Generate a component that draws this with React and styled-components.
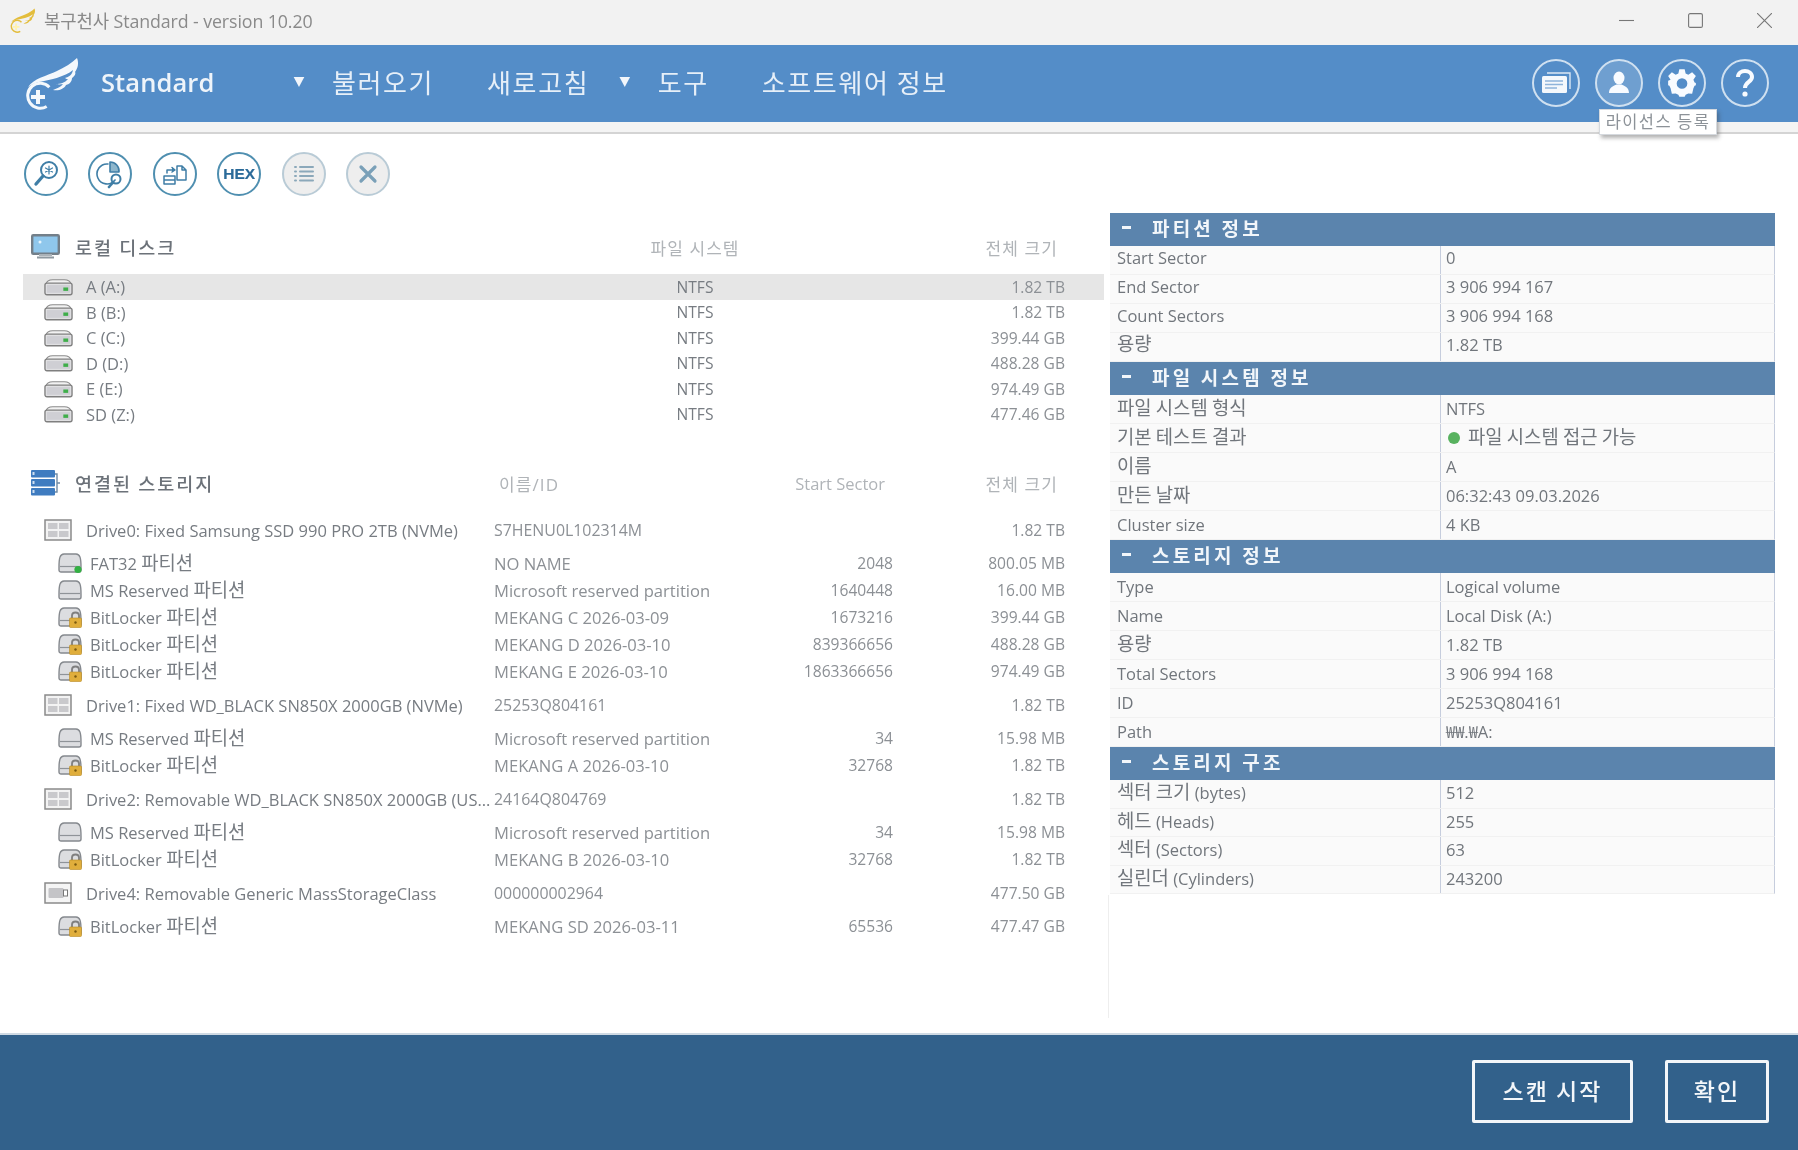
import React from "react";
import styled, { createGlobalStyle } from "styled-components";

const Global = createGlobalStyle`
  html, body { margin: 0; padding: 0; background: #fff; }
  * { box-sizing: border-box; }
`;

const FONT = `"Open Sans", "Noto Sans CJK KR", sans-serif`;
const KFONT = `"Noto Sans CJK KR", "Noto Sans", sans-serif`;

const Root = styled.div`
  width: 1798px; height: 1150px; display: flex; flex-direction: column;
  font-family: ${FONT}; font-size: 16.5px; color: #777c82; overflow: hidden; background: #fff;
  filter: blur(0.35px);
`;

const TitleBar = styled.div`
  height: 45px; background: #f2f2f2; display: flex; align-items: center; padding: 0 0 5px 10px; flex: none;
`;
const TitleText = styled.span`
  margin-left: 8px; font-size: 17.8px; color: #8a8a8a; font-family: ${FONT}; letter-spacing: -0.1px;
`;
const WinControls = styled.div`
  margin-left: auto; display: flex; align-items: center; padding-right: 26px; gap: 54px;
`;
const WinIcon = styled.svg`
  width: 15px; height: 15px; display: block; fill: none; stroke: #777; stroke-width: 1.1;
`;

const Header = styled.header`
  height: 77px; background: #548dc8; display: flex; align-items: center; padding-left: 25px; flex: none; position: relative;
`;
const Brand = styled.div`
  width: 267px; display: flex; align-items: center; flex: none;
`;
const BrandName = styled.span`
  margin: 0 0 4px 21px; color: #eef4fa; font-size: 25.5px; font-weight: 600; letter-spacing: 0.1px;
`;
const Arrow = styled.span`
  width: 14px; height: 10px; flex: none; margin: 0 26px 3px ${p => p.$gap || 0}px;
  background: #f2f6fb; clip-path: polygon(12% 0, 88% 0, 50% 100%);
`;
const MenuItem = styled.span`
  font-family: ${KFONT}; color: #e6eff8; font-size: 26px; font-weight: 400; letter-spacing: 1.6px;
  margin: 0 0 4px ${p => p.$gap || 0}px; white-space: nowrap;
`;
const HeaderTools = styled.div`
  margin: 0 29px 1px auto; display: flex; gap: 15px; position: relative;
`;
const RoundTool = styled.div`
  width: 48px; height: 48px; border-radius: 50%; border: 2px solid #cfe0f0;
  background: ${p => p.$active ? "#6f9fd0" : "transparent"};
  display: flex; align-items: center; justify-content: center; color: #fff;
`;
const Tooltip = styled.div`
  position: absolute; left: 67px; top: 50px; width: 118px; height: 26px; padding-bottom: 3px; background: #fff;
  border: 1px solid #d5d9de; box-shadow: 2px 3px 4px rgba(60,60,60,.4);
  font-family: ${KFONT}; font-size: 16.5px; color: #8c9298; letter-spacing: 1.4px;
  display: flex; align-items: center; justify-content: center; white-space: nowrap; z-index: 5;
`;
const Strip = styled.div`
  height: 12px; background: #f4f4f4; border-bottom: 2px solid #d4d4d4; flex: none;
`;

const Toolbar = styled.div`
  height: 79px; display: flex; align-items: center; padding-left: 24px; gap: 20.4px; flex: none;
`;
const ToolCircle = styled.div`
  width: 44px; height: 44px; border-radius: 50%; display: flex; align-items: center; justify-content: center;
  border: 2px solid ${p => p.$muted ? "#b9cbd6" : "#4f8fb0"};
  background: ${p => p.$muted ? "#eeeeee" : "#fff"};
`;
const HexLabel = styled.span`
  font-family: "Liberation Sans", sans-serif; font-weight: 700; font-size: 15.5px; color: #2a6a99;
  -webkit-text-stroke: 0.2px #2a6a99;
`;

const Main = styled.main`
  flex: 1; display: flex; padding-left: 23px; min-height: 0; gap: 6px;
`;
const Left = styled.section`
  width: 1081px; flex: none;
`;
const SectionHead = styled.div`
  height: 40px; display: grid; align-items: center; padding: 0 46px 0 8px;
  margin: ${p => p.$top}px 0 ${p => p.$bottom}px;
  grid-template-columns: ${p => p.$cols};
`;
const SectionTitle = styled.div`
  display: flex; align-items: center; gap: 15px; font-family: ${KFONT}; font-size: 18.5px; font-weight: 500;
  color: #6c7279; letter-spacing: 2px;
`;
const Caption = styled.span`
  font-family: ${FONT}; color: #b0b4b8; font-size: ${p => p.$latin ? 16.5 : 17}px; letter-spacing: ${p => p.$latin ? 0 : 1.1}px; white-space: nowrap;
  text-align: ${p => p.$align || "left"};
  padding-left: ${p => p.$pad || 0}px;
`;

const DiskRow = styled.div`
  height: 25.5px; display: grid; grid-template-columns: 572px 200px 270px; padding-right: 39px; align-items: center;
  background: ${p => p.$sel ? "#e6e6e6" : "transparent"};
`;
const DriveRow = styled.div`
  height: 32px; margin-bottom: 3.5px; display: grid; grid-template-columns: 471px 246px 153px 172px; padding-right: 39px; align-items: center;
`;
const PartRow = styled.div`
  height: 27px; display: grid; grid-template-columns: 471px 246px 153px 172px; padding-right: 39px; align-items: center;
`;
const Group = styled.div`
  padding-bottom: 4.5px;
`;
const NameCell = styled.div`
  display: flex; align-items: center; padding-left: ${p => p.$indent}px; gap: ${p => p.$gap}px; min-width: 0; white-space: nowrap;
`;
const Ko = styled.span`
  font-family: ${KFONT}; font-size: 1.14em; line-height: 1;
`;
const Cell = styled.span`
  text-align: ${p => p.$align || "left"}; white-space: nowrap; font-size: ${p => p.$size || 15.6}px;
  color: ${p => p.$soft ? "#8c9095" : "#777c82"};
`;

const Panel = styled.aside`
  width: 665px; flex: none; display: flex; flex-direction: column; height: 805px; position: relative;
  &::after { content: ""; position: absolute; left: -2px; top: 682px; bottom: 0; width: 1px; background: #eeeeee; }
`;
const PanelHead = styled.div`
  height: 33px; background: #5b84ad; display: flex; align-items: center; padding: 0 0 4px 12px; color: #f2f6fa;
  font-family: ${KFONT}; font-size: 19px; font-weight: 700; letter-spacing: 3.2px; flex: none;
`;
const Dash = styled.span`
  width: 9px; height: 3px; background: #f2f6fa; margin-right: 21px; flex: none;
`;
const InfoRow = styled.div`
  height: ${p => p.$h}px; display: grid; grid-template-columns: 331px 1fr; background: #fafafa; align-items: stretch;
  border-bottom: 1px solid #f1f1f1; border-right: 1px solid #c6cddd; flex: none;
`;
const InfoKey = styled.div`
  padding: 0 0 ${p => p.$lift}px 7px; display: flex; align-items: center; border-right: 1px solid #c6cddd; color: #71767c; white-space: pre;
`;
const InfoVal = styled.div`
  padding: 0 0 ${p => p.$lift}px 5px; display: flex; align-items: center; gap: 8px; color: #71767c; white-space: pre;
`;
const Dot = styled.span`
  width: 12px; height: 12px; margin-left: 2px; border-radius: 50%; background: #58b25f; flex: none;
`;

const Footer = styled.footer`
  height: 117px; background: #32618b; border-top: 2px solid #cfdae4; flex: none; display: flex; align-items: flex-start;
  justify-content: flex-end; padding: 25px 29px 0 0; gap: 32px;
`;
const FootButton = styled.button`
  width: ${p => p.$w}px; height: 63px; background: transparent; border: 3px solid #f3f6f9; border-radius: 2px;
  color: #f3f6f9; font-family: ${KFONT}; font-size: 23px; font-weight: 500; letter-spacing: 2px; padding: 0 0 4px;
`;

const mix = (text) => text.split(/([\uAC00-\uD7A3]+(?: [\uAC00-\uD7A3]+)*)/).map((part, i) =>
  i % 2 ? <Ko key={i}>{part}</Ko> : part
);

const WingPath = "M3 30 C9 21 22 19 32 14 C40 10 47 6 52 1 C54 6 53 11 50 15 C51 16 50 19 47 21 C47 24 45 27 41 28 C39 32 34 34 28 33 C32 31 36 30 38 27 C34 28 31 27 31 27 C35 27 40 26 43 22 C42 22 41 22 40 21 C44 20 47 18 48 13 C40 20 24 23 14 25 C9 26 6 28 3 30 Z";

const Wing = ({ w, h, color, plus }) => (
  <svg width={w} height={h} viewBox="0 0 55 53" style={{ flex: "none" }}>
    <path d={WingPath} fill={color} />
    <path d="M21 50 A12.5 12.5 0 1 1 25 31" transform="rotate(-4 13 40)" fill="none" stroke={color} strokeWidth="3" />
    <path d="M13 33 V47 M6 40 H20" stroke={plus} strokeWidth="4" fill="none" />
  </svg>
);

const Hdd = () => (
  <svg width="29" height="18" viewBox="0 0 30 18" style={{ flex: "none" }}>
    <path d="M2 6 C3 2 6 1.5 9 1.5 H21 C24 1.5 27 2 28 6" fill="#f2f2f2" stroke="#8b8b8b" strokeWidth="1.2" />
    <rect x="1" y="5" width="28" height="12" rx="2" fill="#e0e0e2" stroke="#7f7f7f" strokeWidth="1.4" />
    <rect x="3" y="7" width="24" height="8" fill="#cfcfd4" />
    <rect x="20" y="9.5" width="5" height="3.5" fill="#3fae4a" />
  </svg>
);
const Monitor = () => (
  <svg width="29" height="26" viewBox="0 0 29 26" style={{ flex: "none" }}>
    <rect x="1.2" y="1.2" width="26.6" height="18.6" rx="1" fill="#8fc7ec" stroke="#737f89" strokeWidth="2.4" />
    <rect x="8" y="20" width="13" height="2" fill="#aab2b8" />
    <rect x="6" y="22.5" width="17" height="2" fill="#8e989f" />
    <circle cx="9" cy="8" r="1.5" fill="#e7f5fd" />
  </svg>
);
const Stack = () => (
  <svg width="29" height="26" viewBox="0 0 29 26" style={{ flex: "none" }}>
    <path d="M22 4 H26 V22 H22 M26 13 H29" fill="none" stroke="#6f8ba6" strokeWidth="1.4" />
    {[0, 9, 18].map(y => (
      <g key={y}>
        <rect x="0" y={y} width="24" height="7.5" rx="1" fill="#3f7cc0" />
        <rect x="1.5" y={y + 2} width="2" height="3" fill="#cfe0f2" />
      </g>
    ))}
  </svg>
);
const DriveIcon = () => (
  <svg width="28" height="22" viewBox="0 0 28 22" style={{ flex: "none" }}>
    <rect x="1" y="1" width="26" height="20" fill="#f3f3f3" stroke="#8a8a8a" strokeWidth="1.5" />
    <rect x="4" y="4" width="9.5" height="6" fill="#c9c9cc" />
    <rect x="15" y="4" width="9.5" height="6" fill="#c9c9cc" />
    <rect x="4" y="12" width="9.5" height="6" fill="#c9c9cc" />
    <rect x="15" y="12" width="9.5" height="6" fill="#c9c9cc" />
  </svg>
);
const UsbIcon = () => (
  <svg width="28" height="22" viewBox="0 0 28 22" style={{ flex: "none" }}>
    <rect x="1" y="1" width="26" height="20" fill="#f5f5f5" stroke="#8a8a8a" strokeWidth="1.5" />
    <rect x="4.5" y="6" width="15" height="10" rx="1" fill="#c4c4c7" />
    <rect x="19.5" y="8" width="4" height="6" fill="#fff" stroke="#777" strokeWidth="1" />
  </svg>
);
const PartIcon = ({ kind }) => (
  <svg width="25" height="22" viewBox="0 0 25 22" style={{ flex: "none" }}>
    <path d="M1 15 C1 6 2 2 6 2 H18 C22 2 23 6 23 15 V18 C23 19.5 22 20 21 20 H3 C2 20 1 19.5 1 18 Z" fill="#dcdde0" stroke="#85898e" strokeWidth="1.4" />
    <path d="M2 14.5 H22" stroke="#8f9398" strokeWidth="1.2" />
    {kind === "ok" && <circle cx="20" cy="17.5" r="3.6" fill="#33b043" />}
    {kind === "lock" && (
      <g>
        <path d="M14 13 V9.5 C14 5.5 21 5.5 21 9.5 V13" fill="none" stroke="#7f7f7f" strokeWidth="1.8" />
        <rect x="11.5" y="12" width="12" height="9.5" rx="1" fill="#e0ae3c" stroke="#b98a22" strokeWidth=".6" />
        <circle cx="17.5" cy="16.5" r="1.2" fill="#7a5a10" />
      </g>
    )}
  </svg>
);

const StrokeIcon = ({ color = "#3f7ea6", children, w = 2 }) => (
  <svg width="30" height="30" viewBox="0 0 30 30" fill="none" stroke={color} strokeWidth={w} strokeLinecap="round" strokeLinejoin="round">{children}</svg>
);

const tools = [
  <StrokeIcon key="a"><circle cx="18" cy="11" r="8" /><path d="M12 17 L5 25" strokeWidth="3.4" /><path d="M18 7 V15 M14.5 9 L21.5 13 M21.5 9 L14.5 13" strokeWidth="1.2" /></StrokeIcon>,
  <StrokeIcon key="b" w={1.6}><path d="M13 5 A10 10 0 1 0 20 21" /><path d="M15 3 V13 H24 A9 9 0 0 0 15 3 Z" fill="#8db6cc" /><circle cx="21" cy="20" r="4.5" strokeWidth="2" /><path d="M18 23.5 L14 28" strokeWidth="2.6" /></StrokeIcon>,
  <StrokeIcon key="c" w={1.5}><path d="M4 17 H15 V25 H4 Z M4 21 H15" /><path d="M17 7 H22 L26 11 V21 H17 Z M22 7 V11 H26" /><path d="M7 14 V11 H13" /><path d="M12 8.5 L15 11 L12 13" fill="#3f7ea6" /></StrokeIcon>,
  <HexLabel key="d">HEX</HexLabel>,
  <StrokeIcon key="e" color="#8ba8ba" w={2}><path d="M11 8 H24 M11 12.5 H24 M11 17 H24 M11 21.5 H24" /><path d="M6 8 H7 M6 12.5 H7 M6 17 H7 M6 21.5 H7" /></StrokeIcon>,
  <StrokeIcon key="f" color="#7aa0b8" w={3.2}><path d="M8 8 L22 22 M22 8 L8 22" /></StrokeIcon>,
];

const disks = [
  ["A (A:)", "NTFS", "1.82 TB", true],
  ["B (B:)", "NTFS", "1.82 TB"],
  ["C (C:)", "NTFS", "399.44 GB"],
  ["D (D:)", "NTFS", "488.28 GB"],
  ["E (E:)", "NTFS", "974.49 GB"],
  ["SD (Z:)", "NTFS", "477.46 GB"],
];

const drives = [
  { name: "Drive0: Fixed Samsung SSD 990 PRO 2TB (NVMe)", id: "S7HENU0L102314M", size: "1.82 TB", parts: [
    ["ok", "FAT32 파티션", "NO NAME", "2048", "800.05 MB"],
    ["", "MS Reserved 파티션", "Microsoft reserved partition", "1640448", "16.00 MB"],
    ["lock", "BitLocker 파티션", "MEKANG C 2026-03-09", "1673216", "399.44 GB"],
    ["lock", "BitLocker 파티션", "MEKANG D 2026-03-10", "839366656", "488.28 GB"],
    ["lock", "BitLocker 파티션", "MEKANG E 2026-03-10", "1863366656", "974.49 GB"],
  ]},
  { name: "Drive1: Fixed WD_BLACK SN850X 2000GB (NVMe)", id: "25253Q804161", size: "1.82 TB", parts: [
    ["", "MS Reserved 파티션", "Microsoft reserved partition", "34", "15.98 MB"],
    ["lock", "BitLocker 파티션", "MEKANG A 2026-03-10", "32768", "1.82 TB"],
  ]},
  { name: "Drive2: Removable WD_BLACK SN850X 2000GB (US...", id: "24164Q804769", size: "1.82 TB", parts: [
    ["", "MS Reserved 파티션", "Microsoft reserved partition", "34", "15.98 MB"],
    ["lock", "BitLocker 파티션", "MEKANG B 2026-03-10", "32768", "1.82 TB"],
  ]},
  { name: "Drive4: Removable Generic MassStorageClass", id: "000000002964", size: "477.50 GB", usb: true, parts: [
    ["lock", "BitLocker 파티션", "MEKANG SD 2026-03-11", "65536", "477.47 GB"],
  ]},
];

const info = [
  { title: "파티션 정보", h: 29, lift: 5, rows: [["Start Sector", "0"], ["End Sector", "3 906 994 167"], ["Count Sectors", "3 906 994 168"], ["용량", "1.82 TB"]] },
  { title: "파일 시스템 정보", h: 29, lift: 1, rows: [["파일 시스템 형식", "NTFS"], ["기본 테스트 결과", "파일 시스템 접근 가능", true], ["이름", "A"], ["만든 날짜", "06:32:43 09.03.2026"], ["Cluster size", "4 KB"]] },
  { title: "스토리지 정보", h: 29, lift: 2, rows: [["Type", "Logical volume"], ["Name", "Local Disk (A:)"], ["용량", "1.82 TB"], ["Total Sectors", "3 906 994 168"], ["ID", "25253Q804161"], ["Path", "₩₩.₩A:"]] },
  { title: "스토리지 구조", h: 28.5, lift: 2, rows: [["섹터 크기 (bytes)", "512"], ["헤드 (Heads)", "255"], ["섹터 (Sectors)", "63"], ["실린더 (Cylinders)", "243200"]] },
];

export default function App() {
  return (
    <Root>
      <Global />
      <TitleBar>
        <Wing w={26} h={25} color="#e3bd3c" plus="#fff3b0" />
        <TitleText>복구천사 Standard - version 10.20</TitleText>
        <WinControls>
          <WinIcon viewBox="0 0 15 15"><path d="M0 7.5 H15" /></WinIcon>
          <WinIcon viewBox="0 0 15 15"><rect x=".6" y=".6" width="13.8" height="13.8" rx="1.5" /></WinIcon>
          <WinIcon viewBox="0 0 15 15"><path d="M0 0 L15 15 M15 0 L0 15" /></WinIcon>
        </WinControls>
      </TitleBar>
      <Header>
        <Brand>
          <Wing w={55} h={53} color="#f4f8fc" plus="#f4f8fc" />
          <BrandName>Standard</BrandName>
        </Brand>
        <Arrow />
        <MenuItem>불러오기</MenuItem>
        <MenuItem $gap={53}>새로고침</MenuItem>
        <Arrow $gap={28.6} />
        <MenuItem>도구</MenuItem>
        <MenuItem $gap={53}>소프트웨어 정보</MenuItem>
        <HeaderTools>
          <RoundTool>
            <svg width="32" height="26" viewBox="0 0 32 26" fill="none">
              <path d="M7 3 H30 V19" stroke="#dce8f4" strokeWidth="1.4" />
              <rect x="2" y="6" width="25" height="17" rx="1.5" fill="#f4f8fc" />
              <path d="M5 11 H23 M5 14.5 H23 M5 18 H17" stroke="#8fb4da" strokeWidth="1.6" />
            </svg>
          </RoundTool>
          <RoundTool $active>
            <svg width="24" height="26" viewBox="0 0 24 26" fill="#f8fbff">
              <ellipse cx="12" cy="8" rx="5.5" ry="6.5" />
              <path d="M2 23 C2 17 7 16 9.5 14.5 H14.5 C17 16 22 17 22 23 Z" />
            </svg>
          </RoundTool>
          <RoundTool>
            <svg width="32" height="32" viewBox="0 0 30 30">
              <path fill="#f8fbff" fillRule="evenodd" d="M12.5 2 H17.5 L18.4 6.1 L20.9 7.2 L24.5 4.9 L28 8.4 L25.7 12 L26.8 14.5 L28 15 V17 L26.8 17.5 L25.7 20 L24.5 25.1 L20.9 24.8 L18.4 25.9 L17.5 28 H12.5 L11.6 25.9 L9.1 24.8 L5.5 25.1 L4.3 20 L3.2 17.5 L2 17 V13 L4.3 12 L2 8.4 L5.5 4.9 L9.1 7.2 L11.6 6.1 Z M15 10.5 A5 5 0 1 0 15 20.5 A5 5 0 1 0 15 10.5 Z" />
            </svg>
          </RoundTool>
          <RoundTool>
            <svg width="24" height="30" viewBox="0 0 24 30" fill="none" stroke="#f8fbff" strokeWidth="4">
              <path d="M5 9 C5 1 19 1 19 9 C19 14 12 14 12 20" />
              <circle cx="12" cy="26" r="2.6" fill="#f8fbff" stroke="none" />
            </svg>
          </RoundTool>
          <Tooltip>라이선스 등록</Tooltip>
        </HeaderTools>
      </Header>
      <Strip />
      <Toolbar>
        {tools.map((t, i) => <ToolCircle key={i} $muted={i > 3}>{t}</ToolCircle>)}
      </Toolbar>
      <Main>
        <Left>
          <SectionHead $top={14} $bottom={7} $cols="564px 200px 263px">
            <SectionTitle><Monitor />로컬 디스크</SectionTitle>
            <Caption $align="center">파일 시스템</Caption>
            <Caption $align="right">전체 크기</Caption>
          </SectionHead>
          {disks.map(d => (
            <DiskRow key={d[0]} $sel={d[3]}>
              <NameCell $indent={21} $gap={13}><Hdd />{d[0]}</NameCell>
              <Cell $align="center">{d[1]}</Cell>
              <Cell $align="right" $soft>{d[2]}</Cell>
            </DiskRow>
          ))}
          <SectionHead $top={36} $bottom={11} $cols="463px 246px 145px 173px">
            <SectionTitle><Stack />연결된 스토리지</SectionTitle>
            <Caption $pad={5}>이름/ID</Caption>
            <Caption $align="right" $latin>Start Sector</Caption>
            <Caption $align="right">전체 크기</Caption>
          </SectionHead>
          {drives.map(dr => (
            <Group key={dr.name}>
              <DriveRow>
                <NameCell $indent={21} $gap={14}>{dr.usb ? <UsbIcon /> : <DriveIcon />}{dr.name}</NameCell>
                <Cell $soft $size={15.9}>{dr.id}</Cell>
                <span />
                <Cell $align="right" $soft>{dr.size}</Cell>
              </DriveRow>
              {dr.parts.map((p, i) => (
                <PartRow key={i}>
                  <NameCell $indent={35} $gap={7}><PartIcon kind={p[0]} /><span>{mix(p[1])}</span></NameCell>
                  <Cell $soft $size={16.6}>{p[2]}</Cell>
                  <Cell $align="right" $soft>{p[3]}</Cell>
                  <Cell $align="right" $soft>{p[4]}</Cell>
                </PartRow>
              ))}
            </Group>
          ))}
        </Left>
        <Panel>
          {info.map(sec => (
            <React.Fragment key={sec.title}>
              <PanelHead><Dash />{sec.title}</PanelHead>
              {sec.rows.map(r => (
                <InfoRow key={r[0] + r[1]} $h={sec.h}>
                  <InfoKey $lift={sec.lift}><span>{mix(r[0])}</span></InfoKey>
                  <InfoVal $lift={sec.lift}>{r[2] && <Dot />}<span>{mix(r[1])}</span></InfoVal>
                </InfoRow>
              ))}
            </React.Fragment>
          ))}
        </Panel>
      </Main>
      <Footer>
        <FootButton $w={161}>스캔 시작</FootButton>
        <FootButton $w={104}>확인</FootButton>
      </Footer>
    </Root>
  );
}
